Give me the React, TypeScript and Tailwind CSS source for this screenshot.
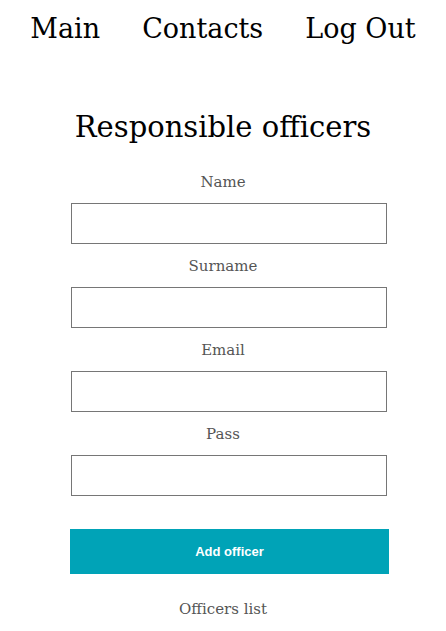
import React from "react";

const fields = ["Name", "Surname", "Email", "Pass"];

function Field({label}: {label: string}) {
  return (
    <div className="flex flex-col items-center">
      <label className="h-[42px] pt-[11px] text-[15px] leading-[20px] text-[#555]">{label}</label>
      <input
        type={label === "Pass" ? "password" : "text"}
        className="ml-[11px] h-[41px] w-[316px] border border-[#767676] bg-white px-2 outline-none"
      />
    </div>
  );
}

export default function App() {
  return (
    <div className="min-h-[631px] w-[446px] bg-white font-['DejaVu_Serif',serif] text-black">
      <nav className="flex justify-center gap-[42px] pt-[9px] text-[27px] leading-[40px] font-light">
        <a href="#">Main</a>
        <a href="#">Contacts</a>
        <a href="#">Log Out</a>
      </nav>

      <main className="flex flex-col items-center">
        <h1 className="mt-[58px] text-[29px] leading-[40px]">Responsible officers</h1>
        <form className="mt-[14px] flex flex-col items-center gap-[1px]">
          {fields.map((f) => (
            <Field key={f} label={f} />
          ))}
          <button
            type="button"
            className="ml-[13px] mt-[32px] h-[45px] w-[319px] bg-[#00a3b7] font-['Liberation_Sans',sans-serif] text-[13px] font-bold text-white"
          >
            Add officer
          </button>
        </form>
        <p className="mt-[25px] text-[15px] leading-[20px] text-[#555]">Officers list</p>
      </main>
    </div>
  );
}
